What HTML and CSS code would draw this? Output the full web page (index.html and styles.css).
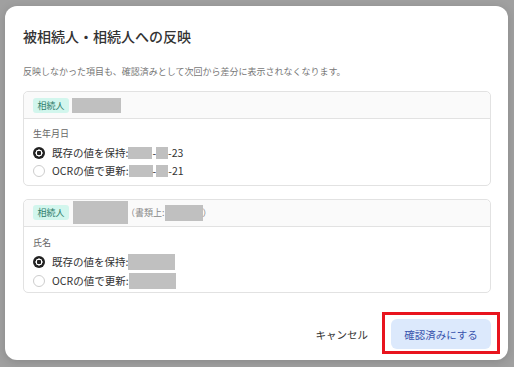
FILE: index.html
```html
<!DOCTYPE html>
<html lang="ja">
<head>
    <meta charset="UTF-8">
    <meta name="viewport" content="width=device-width, initial-scale=1.0">
    <title>被相続人・相続人への反映</title>
    <link rel="stylesheet" href="styles.css">
</head>
<body>
    <div class="modal">
        <h1>被相続人・相続人への反映</h1>
        <p class="note">反映しなかった項目も、確認済みとして次回から差分に表示されなくなります。</p>

        <div class="card">
            <div class="card-header">
                <span class="badge">相続人</span>
                <span class="mask name-sm"></span>
            </div>
            <div class="card-body">
                <div class="field-label">生年月日</div>
                <label class="option">
                    <span class="radio checked"></span>
                    <span>既存の値を保持:</span><span class="mask yy"></span><span>-</span><span class="mask mm"></span><span>-23</span>
                </label>
                <label class="option">
                    <span class="radio"></span>
                    <span>OCRの値で更新:</span><span class="mask yy"></span><span>-</span><span class="mask mm"></span><span>-21</span>
                </label>
            </div>
        </div>

        <div class="card">
            <div class="card-header">
                <span class="badge">相続人</span>
                <span class="mask name-lg"></span>
                <span class="doc-name">（書類上:<span class="mask doc"></span>）</span>
            </div>
            <div class="card-body tall">
                <div class="field-label">氏名</div>
                <label class="option">
                    <span class="radio checked"></span>
                    <span>既存の値を保持:</span><span class="mask value"></span>
                </label>
                <label class="option">
                    <span class="radio"></span>
                    <span>OCRの値で更新:</span><span class="mask value"></span>
                </label>
            </div>
        </div>

        <div class="actions">
            <button class="btn-cancel">キャンセル</button>
            <button class="btn-confirm">確認済みにする</button>
        </div>
    </div>
</body>
</html>
```

FILE: styles.css
```css
body {
    margin: 0;
    padding: 6px 0 0 5px;
    background-color: #a0a0a0;
    font-family: "Noto Sans CJK JP", "Noto Sans", sans-serif;
    color: #333;
    height: 367px;
    box-sizing: border-box;
    overflow: hidden;
}

.modal {
    width: 503px;
    height: 354px;
    box-sizing: border-box;
    padding: 20px 17px 0 18px;
    background-color: #fff;
    border-radius: 12px;
    box-shadow: 0 2px 10px rgba(0, 0, 0, 0.15);
}

h1 {
    margin: 0;
    font-size: 14px;
    line-height: 20px;
    font-weight: 500;
    color: #333;
}

.note {
    margin: 19px 0 13px;
    font-size: 9px;
    line-height: 13px;
    color: #777;
}

.card {
    border: 1px solid #e2e2e2;
    border-radius: 5px;
    margin-bottom: 13px;
}

.card-header {
    height: 26px;
    display: flex;
    align-items: center;
    padding: 0 9px;
    background-color: #fafafa;
    border-bottom: 1px solid #e2e2e2;
    border-radius: 5px 5px 0 0;
    font-size: 9px;
    color: #888;
}

.badge {
    padding: 0 4.5px;
    height: 15px;
    line-height: 15px;
    border-radius: 3px;
    background-color: #d2f6ed;
    color: #2c7c6a;
    font-size: 9px;
}

.mask {
    display: inline-block;
    background-color: #c0c0c0;
}

.name-sm {
    width: 49px;
    height: 15px;
    margin-left: 3px;
}

.name-lg {
    width: 55px;
    height: 23px;
    margin-left: 4px;
}

.doc-name {
    display: flex;
    align-items: center;
    margin-left: -2px;
}

.doc {
    width: 38px;
    height: 16px;
}

.card-body {
    padding: 8px 9px 5px;
}

.card-body.tall {
    padding: 9px 9px 2px;
}

.field-label {
    font-size: 9px;
    line-height: 13px;
    color: #666;
    margin-bottom: 3.5px;
}

.option {
    display: flex;
    align-items: center;
    height: 18px;
    font-size: 10.5px;
    color: #333;
}

.tall .option {
    height: 19px;
}

.radio {
    width: 12px;
    height: 12px;
    box-sizing: border-box;
    border-radius: 50%;
    border: 1px solid #cdcdcd;
    margin-right: 7px;
}

.radio.checked {
    border: none;
    background: radial-gradient(circle, #222 0 2px, #fff 2.5px 3.3px, #222 3.8px);
}

.yy {
    width: 24px;
    height: 12px;
}

.mm {
    width: 12px;
    height: 12px;
}

.value {
    width: 47px;
    height: 16px;
}

.actions {
    display: flex;
    justify-content: flex-end;
    align-items: center;
    margin-top: 26px;
    gap: 23px;
}

.actions button {
    font-family: inherit;
    font-size: 10.5px;
    border: none;
    cursor: pointer;
}

.btn-cancel {
    background: none;
    padding: 0;
    color: #333;
}

.btn-confirm {
    position: relative;
    width: 100px;
    height: 30px;
    border-radius: 6px;
    background-color: #dce9fc;
    color: #3953ad;
}

/* red highlight frame from the capture */
.btn-confirm::after {
    content: "";
    position: absolute;
    left: -9px;
    right: -9px;
    top: -7px;
    bottom: -5px;
    border: 3px solid #e8141e;
}
```
